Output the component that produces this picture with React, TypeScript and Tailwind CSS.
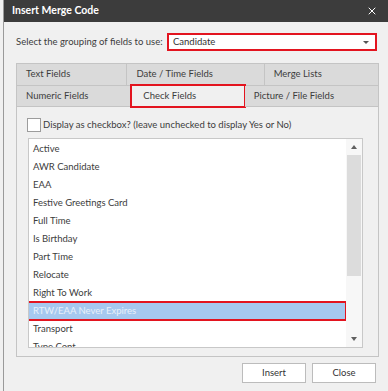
import { X } from 'lucide-react';

const items = [
  'Active',
  'AWR Candidate',
  'EAA',
  'Festive Greetings Card',
  'Full Time',
  'Is Birthday',
  'Part Time',
  'Relocate',
  'Right To Work',
  'RTW/EAA Never Expires',
  'Transport',
  'Type Cont',
];

function Tab({ label, width, height, selected }: { label: string; width: string; height: string; selected?: boolean }) {
  return (
    <div
      className={`relative flex items-center border-r border-b border-[#c4c4c4] last:border-r-0 ${width} ${height} ${
        selected ? 'bg-[#f0f0f0] pl-[11px]' : 'bg-[#dadada] pl-[9px]'
      }`}
    >
      <span>{label}</span>
      {selected && <div className="absolute -inset-[2px] border-2 border-[#e3141f]" />}
    </div>
  );
}

export default function App() {
  return (
    <div
      className="w-[388px] h-[391px] bg-[#f0f0f0] pl-[3px] text-[9.5px] text-[#3c3c3c] overflow-hidden"
      style={{ fontFamily: 'Lato, "Liberation Sans", sans-serif' }}
    >
      <div className="h-full border-l border-[#9a9a9a] flex flex-col">
        {/* Title bar */}
        <div className="h-[22px] bg-[#3c3c3c] flex items-center justify-between pl-[8px] pr-[10px]">
          <span className="text-white font-bold text-[10.5px]">Insert Merge Code</span>
          <X className="w-[12px] h-[12px] text-white" strokeWidth={2} />
        </div>

        <div className="flex flex-col pl-[12px] pr-[9px]">
          {/* Grouping selector */}
          <div className="flex items-center mt-[11px] h-[18px]">
            <span className="w-[151px] whitespace-nowrap">Select the grouping of fields to use:</span>
            <div className="w-[210px] h-[18px] border-2 border-[#e3141f] bg-white flex items-center justify-between pl-[4px] pr-[6px]">
              <span className="text-[#333]">Candidate</span>
              <span className="w-0 h-0 border-l-[3px] border-r-[3px] border-t-[3px] border-l-transparent border-r-transparent border-t-[#555]" />
            </div>
          </div>

          {/* Tabs */}
          <div className="mt-[12px] w-[363px] border border-[#c4c4c4] border-b-0">
            <div className="flex">
              <Tab label="Text Fields" width="w-[111px]" height="h-[22px]" />
              <Tab label="Date / Time Fields" width="w-[138px]" height="h-[22px]" />
              <Tab label="Merge Lists" width="w-[114px]" height="h-[22px]" />
            </div>
            <div className="flex">
              <Tab label="Numeric Fields" width="w-[116px]" height="h-[21px]" />
              <Tab label="Check Fields" width="w-[113px]" height="h-[21px]" selected />
              <Tab label="Picture / File Fields" width="w-[134px]" height="h-[21px]" />
            </div>
          </div>

          {/* Tab panel */}
          <div className="w-[363px] h-[250px] border border-t-0 border-[#c4c4c4] bg-[#f0f0f0] pl-[10px] pt-[11px]">
            <div className="flex items-center gap-[2px] h-[14px]">
              <div className="w-[14px] h-[14px] bg-white border border-[#9c9c9c]" />
              <span className="whitespace-nowrap">Display as checkbox? (leave unchecked to display Yes or No)</span>
            </div>

            <div className="mt-[6px] ml-[1px] w-[335px] h-[210px] border border-[#c8c8c8] bg-white flex">
              <div className="flex-1 overflow-hidden pt-[1px]">
                {items.map((item) => {
                  const selected = item === 'RTW/EAA Never Expires';
                  return (
                    <div
                      key={item}
                      className={`relative h-[18px] flex items-center pl-[4px] ${
                        selected ? 'bg-[#a6c8ef] text-[#e9f0fa]' : ''
                      }`}
                    >
                      {item}
                      {selected && <div className="absolute -left-[2px] -right-[1px] -top-[1px] -bottom-[1px] border-2 border-[#e3141f]" />}
                    </div>
                  );
                })}
              </div>
              {/* Scrollbar */}
              <div className="w-[16px] flex flex-col bg-[#f7f7f7]">
                <div className="h-[16px] flex items-center justify-center">
                  <span className="w-0 h-0 border-l-[3px] border-r-[3px] border-b-[4px] border-l-transparent border-r-transparent border-b-[#606060]" />
                </div>
                <div className="h-[121px] mx-[1px] bg-[#dcdcdc]" />
                <div className="flex-1" />
                <div className="h-[16px] flex items-center justify-center">
                  <span className="w-0 h-0 border-l-[3px] border-r-[3px] border-t-[4px] border-l-transparent border-r-transparent border-t-[#606060]" />
                </div>
              </div>
            </div>
          </div>

          {/* Buttons */}
          <div className="mt-[6px] flex justify-end gap-[6px] pr-[3px]">
            <button className="w-[64px] h-[20px] bg-white border border-[#bcbcbc] text-[#333]">Insert</button>
            <button className="w-[64px] h-[20px] bg-white border border-[#bcbcbc] text-[#333]">Close</button>
          </div>
        </div>
      </div>
    </div>
  );
}
